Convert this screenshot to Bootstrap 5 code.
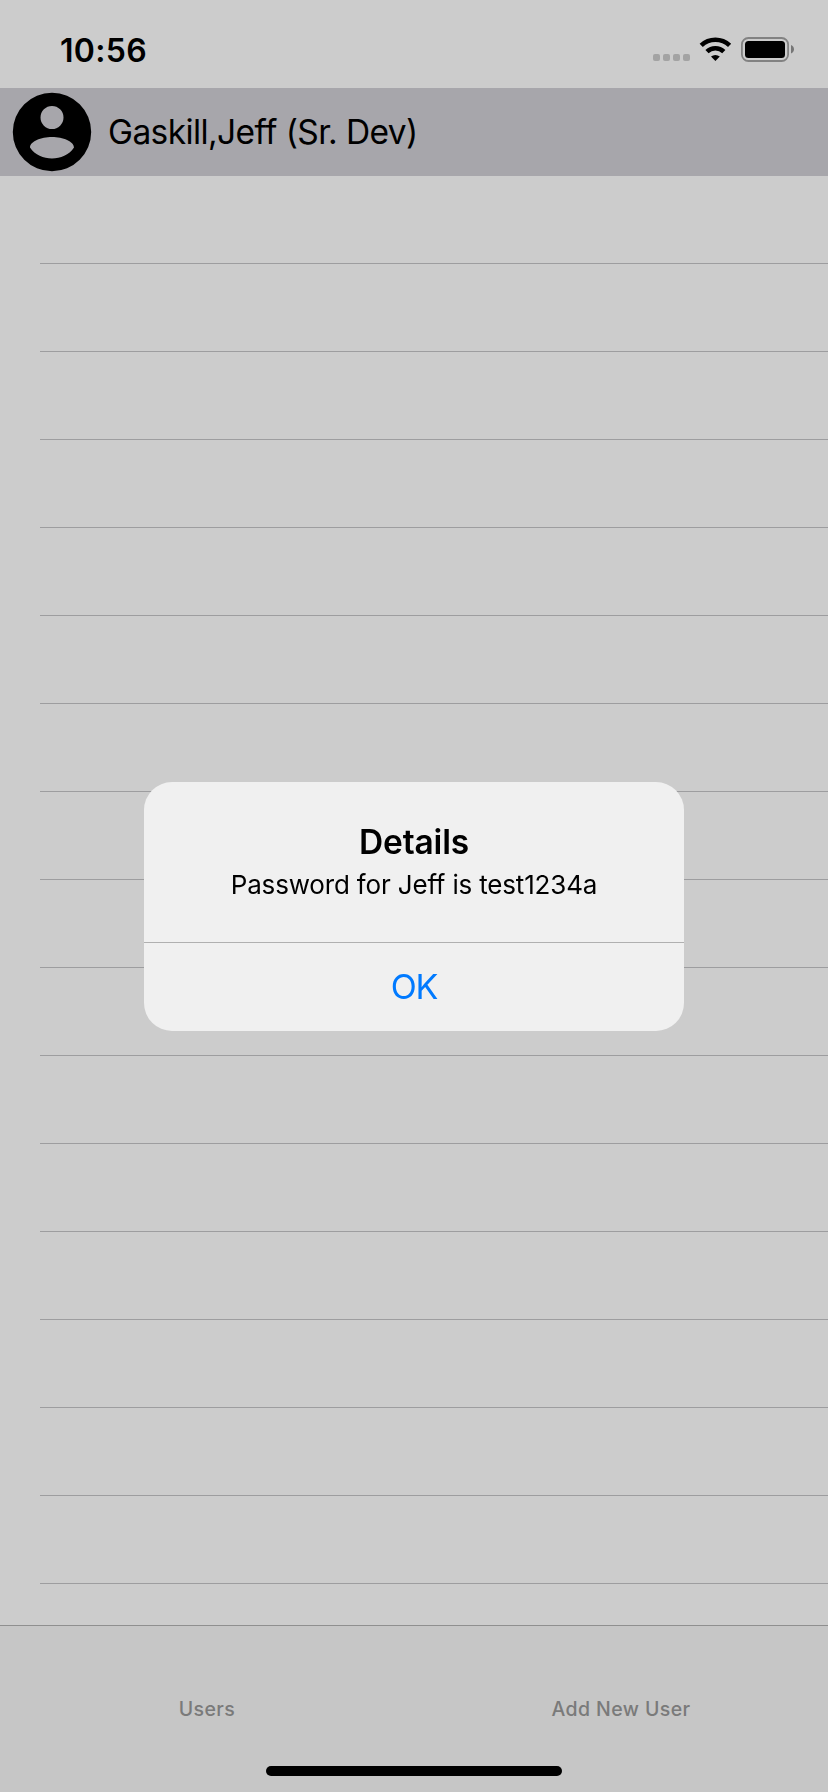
<!DOCTYPE html>
<html lang="en">
<head>
<meta charset="utf-8">
<meta name="viewport" content="width=device-width, initial-scale=1">
<title>Users</title>
<link href="https://cdn.jsdelivr.net/npm/bootstrap@5.3.0/dist/css/bootstrap.min.css" rel="stylesheet">
<style>
  body { font-family: Inter, "Liberation Sans", sans-serif; color: #000; background: #ccc; line-height: 1; white-space: nowrap; }
  .status-bar { height: 88px; padding: 0 34px 0 60px; }
  .status-icons { margin-top: 10px; }
  .clock { font-size: 32px; font-weight: 600; letter-spacing: .3px; margin-top: 14px; }
  .user-row { height: 88px; margin-left: 40px; border-bottom: 1px solid #9d9d9f; }
  .user-row.chosen { margin-left: 0; padding-left: 12px; background: #a7a6ab; border-bottom: 0; }
  .user-name { font-size: 33.5px; letter-spacing: -.6px; margin-left: 16px; padding-top: 2px; }
  .tab-bar { height: 167px; background: #c6c6c6; border-top: 1px solid #8f8f8f; }
  .tab-label { font-size: 19.5px; font-weight: 500; color: #7a7a7a; letter-spacing: .4px; padding-top: 74px; }
  .home-bar { width: 296px; height: 10px; margin-bottom: 16px; }
  .alert-layer { padding-top: 21px; }
  .alert-box { width: 540px; height: 249px; border-radius: 28px; background: #f0f0f0; color: #000; }
  .alert-text { height: 160px; padding-top: 43px; }
  .alert-title { font-size: 33.5px; font-weight: 600; letter-spacing: -.15px; line-height: 34px; }
  .alert-message { font-size: 26px; line-height: 26px; letter-spacing: -.17px; margin-top: 13px; }
  .alert-ok { height: 89px; border: 0; border-top: 1px solid #b0b0b0; background: transparent; color: #007aff; font-size: 34px; letter-spacing: -1.2px; }
</style>
</head>
<body class="vh-100 overflow-hidden">
<div class="d-flex flex-column vh-100">
  <header class="status-bar d-flex justify-content-between align-items-center">
    <span class="clock">10:56</span>
    <svg class="status-icons" width="142" height="26" viewBox="652 36 142 26" aria-label="Signal, Wi-Fi, battery">
      <g fill="#a3a3a3"><rect x="653" y="54" width="7" height="7" rx="2"/><rect x="663" y="54" width="7" height="7" rx="2"/><rect x="673" y="54" width="7" height="7" rx="2"/><rect x="683" y="54" width="7" height="7" rx="2"/></g>
      <g fill="none" stroke="#000" stroke-width="4.6"><path d="M701.2 45.4a20.6 20.6 0 0 1 28.4 0"/><path d="M707 51.6a12.2 12.2 0 0 1 16.8 0"/></g>
      <path d="M711 56.6a6.6 6.6 0 0 1 8.8 0l-4.4 4.4z"/>
      <rect x="741.9" y="38" width="46.2" height="23" rx="6.5" fill="none" stroke="#828282" stroke-width="1.8"/>
      <rect x="745" y="41" width="40" height="17" rx="3.5"/>
      <path d="M791 45c4 1.5 4 7 0 8.500z" fill="#767676"/>
    </svg>
  </header>
  <main class="flex-grow-1 overflow-hidden">
    <div>
      <div class="user-row chosen d-flex align-items-center">
        <svg width="80" height="80" viewBox="0 0 80 80" aria-hidden="true">
          <path fill-rule="evenodd" d="M40 .8a39.200 39.200 0 1 0 0 78.400a39.200 39.200 0 0 0 0-78.400zM40 14a11.500 11.500 0 1 1 0 23a11.500 11.500 0 0 1 0-23zM40 45c11 0 22 4.500 22 10.500C57 63 48.500 66.500 40 66.500S23 63 18 55.500C18 49.500 29 45 40 45z"/>
        </svg>
        <span class="user-name">Gaskill,Jeff (Sr. Dev)</span>
      </div>
      <div class="user-row"></div><div class="user-row"></div><div class="user-row"></div><div class="user-row"></div>
      <div class="user-row"></div><div class="user-row"></div><div class="user-row"></div><div class="user-row"></div>
      <div class="user-row"></div><div class="user-row"></div><div class="user-row"></div><div class="user-row"></div>
      <div class="user-row"></div><div class="user-row"></div><div class="user-row"></div><div class="user-row"></div>
    </div>
  </main>
  <footer class="tab-bar d-flex flex-column justify-content-between align-items-center flex-shrink-0">
    <nav class="row g-0 w-100 text-center">
      <span class="col-6 tab-label">Users</span>
      <span class="col-6 tab-label">Add New User</span>
    </nav>
    <div class="home-bar bg-black rounded-pill"></div>
  </footer>
</div>
<div class="alert-layer position-fixed top-0 start-0 w-100 h-100 d-flex align-items-center justify-content-center" role="dialog">
  <div class="alert-box overflow-hidden text-center">
    <div class="alert-text">
      <div class="alert-title">Details</div>
      <div class="alert-message">Password for Jeff is test1234a</div>
    </div>
    <button class="alert-ok d-block w-100 p-0" type="button">OK</button>
  </div>
</div>
<script src="https://cdn.jsdelivr.net/npm/bootstrap@5.3.0/dist/js/bootstrap.bundle.min.js"></script>
</body>
</html>
